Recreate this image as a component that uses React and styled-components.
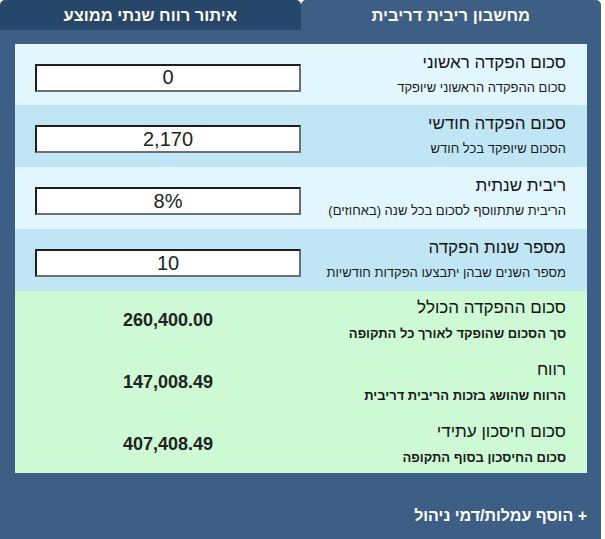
import React from "react";
import styled, { createGlobalStyle } from "styled-components";

const GlobalStyle = createGlobalStyle`
  body {
    margin: 0;
    background: #ffffff;
    font-family: "Liberation Sans", Arial, sans-serif;
  }
`;

const inputs = [
  { title: "סכום הפקדה ראשוני", sub: "סכום ההפקדה הראשוני שיופקד", value: "0" },
  { title: "סכום הפקדה חודשי", sub: "הסכום שיופקד בכל חודש", value: "2,170" },
  { title: "ריבית שנתית", sub: "הריבית שתתווסף לסכום בכל שנה (באחוזים)", value: "8%" },
  { title: "מספר שנות הפקדה", sub: "מספר השנים שבהן יתבצעו הפקדות חודשיות", value: "10" },
];

const results = [
  { title: "סכום ההפקדה הכולל", sub: "סך הסכום שהופקד לאורך כל התקופה", value: "260,400.00" },
  { title: "רווח", sub: "הרווח שהושג בזכות הריבית דריבית", value: "147,008.49" },
  { title: "סכום חיסכון עתידי", sub: "סכום החיסכון בסוף התקופה", value: "407,408.49" },
];

const App = () => {
  return (
    <>
      <GlobalStyle />
      <Calculator dir="rtl">
        <Tabs>
          <Tab active>מחשבון ריבית דריבית</Tab>
          <Tab>איתור רווח שנתי ממוצע</Tab>
        </Tabs>
        <Panel>
          <Fields>
            {inputs.map((item, i) => (
              <FieldRow key={item.title} shade={i % 2 === 1}>
                <Label>
                  <Title>{item.title}</Title>
                  <Sub>{item.sub}</Sub>
                </Label>
                <InputCell>
                  <Input defaultValue={item.value} />
                </InputCell>
              </FieldRow>
            ))}
          </Fields>
          <Results>
            {results.map((item) => (
              <ResultRow key={item.title}>
                <Label>
                  <Title>{item.title}</Title>
                  <Sub bold>{item.sub}</Sub>
                </Label>
                <Value>{item.value}</Value>
              </ResultRow>
            ))}
          </Results>
          <AddFees>+ הוסף עמלות/דמי ניהול</AddFees>
        </Panel>
      </Calculator>
    </>
  );
};

const Calculator = styled.div`
  width: 601px;
  height: 539px;
  display: flex;
  flex-direction: column;
`;

const Tabs = styled.div`
  display: flex;
  height: 30px;
`;

const Tab = styled.div`
  flex: 1;
  display: flex;
  align-items: center;
  justify-content: center;
  padding-top: 1px;
  background: ${(p) => (p.active ? "#3d5f85" : "#26466a")};
  border-radius: 5px 5px 0 0;
  color: #fdf9e8;
  font-size: 16.5px;
  font-weight: bold;
`;

const Panel = styled.div`
  flex: 1;
  background: #3d5f85;
  padding: 14px 14px 0 15px;
`;

const Fields = styled.div`
  display: flex;
  flex-direction: column;
`;

const FieldRow = styled.div`
  height: 61px;
  display: grid;
  grid-template-columns: 286px 1fr;
  background: ${(p) => (p.shade ? "#c0e6f6" : "#e2f6fe")};
  & + & {
    height: 62px;
  }
`;

const Label = styled.div`
  display: flex;
  flex-direction: column;
  padding: 9px 21px 0 0;
  gap: 7px;
`;

const Title = styled.div`
  font-size: 17px;
  line-height: 20px;
  color: #141414;
`;

const Sub = styled.div`
  font-size: 13px;
  line-height: 16px;
  color: #1a1a1a;
  font-weight: ${(p) => (p.bold ? "bold" : "normal")};
`;

const InputCell = styled.div`
  display: flex;
  align-items: center;
  padding: 6px 0 0 20px;
`;

const Input = styled.input`
  box-sizing: border-box;
  width: 266px;
  height: 28px;
  margin: 0;
  padding: 0;
  border-style: solid;
  border-width: 2px;
  border-color: #1e1e1e #6f6f6f #6f6f6f #1e1e1e;
  background: #ffffff;
  font-family: "Liberation Sans", Arial, sans-serif;
  font-size: 20px;
  color: #222222;
  text-align: center;
  direction: ltr;
  outline: none;
`;

const Results = styled.div`
  background: #cdf9d4;
  padding: 7px 0;
  display: flex;
  flex-direction: column;
  gap: 18px;
`;

const ResultRow = styled.div`
  display: grid;
  grid-template-columns: 286px 1fr;
  align-items: center;
  & > ${Label} {
    padding-top: 0;
    gap: 8px;
  }
`;

const Value = styled.div`
  padding-left: 20px;
  width: 266px;
  text-align: center;
  direction: ltr;
  font-size: 18px;
  font-weight: bold;
  color: #222222;
`;

const AddFees = styled.div`
  margin-top: 33px;
  color: #ffffff;
  font-size: 16px;
  line-height: 20px;
  font-weight: bold;
`;

export default App;
